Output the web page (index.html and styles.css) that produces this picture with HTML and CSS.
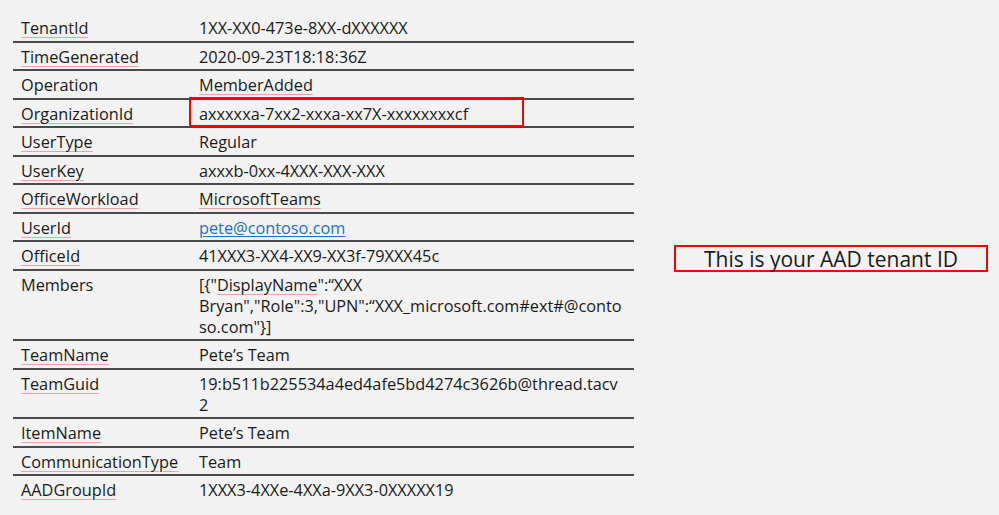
FILE: index.html
```html
<!DOCTYPE html>
<html lang="en">
<head>
<meta charset="utf-8">
<title>Audit record</title>
<link rel="stylesheet" href="styles.css">
</head>
<body>
<main class="page">
  <table class="record">
    <tbody>
      <tr><td class="key"><span class="spell">TenantId</span></td><td class="val">1XX-XX0-473e-8XX-dXXXXXX</td></tr>
      <tr><td class="key"><span class="spell">TimeGenerated</span></td><td class="val">2020-09-23T18:18:36Z</td></tr>
      <tr><td class="key">Operation</td><td class="val"><span class="spell">MemberAdded</span></td></tr>
      <tr><td class="key"><span class="spell">OrganizationId</span></td><td class="val flag">axxxxxa-7xx2-xxxa-xx7X-xxxxxxxxcf</td></tr>
      <tr><td class="key"><span class="spell">UserType</span></td><td class="val">Regular</td></tr>
      <tr><td class="key"><span class="spell">UserKey</span></td><td class="val">axxxb-0xx-4XXX-XXX-XXX</td></tr>
      <tr><td class="key"><span class="spell">OfficeWorkload</span></td><td class="val"><span class="spell">MicrosoftTeams</span></td></tr>
      <tr><td class="key"><span class="spell">UserId</span></td><td class="val"><a class="link" href="#">pete@contoso.com</a></td></tr>
      <tr><td class="key"><span class="spell">OfficeId</span></td><td class="val">41XXX3-XX4-XX9-XX3f-79XXX45c</td></tr>
      <tr><td class="key">Members</td><td class="val">[{"<span class="spell">DisplayName</span>":“XXX<br>Bryan","Role":3,"UPN":“XXX_microsoft.com#ext#@conto<br>so.com"}]</td></tr>
      <tr><td class="key"><span class="spell">TeamName</span></td><td class="val">Pete’s Team</td></tr>
      <tr><td class="key"><span class="spell">TeamGuid</span></td><td class="val">19:b511b225534a4ed4afe5bd4274c3626b@thread.tacv<br>2</td></tr>
      <tr><td class="key"><span class="spell">ItemName</span></td><td class="val">Pete’s Team</td></tr>
      <tr><td class="key"><span class="spell">CommunicationType</span></td><td class="val">Team</td></tr>
      <tr><td class="key"><span class="spell">AADGroupId</span></td><td class="val">1XXX3-4XXe-4XXa-9XX3-0XXXXX19</td></tr>
    </tbody>
  </table>
  <aside class="note">
    <p class="note-box">This is your AAD tenant ID</p>
  </aside>
</main>
</body>
</html>
```

FILE: styles.css
```css
html, body {
  margin: 0;
  padding: 0;
  background: #f2f2f2;
}

body {
  width: 999px;
  height: 515px;
  overflow: hidden;
  font-family: "Open Sans", "Noto Sans", sans-serif;
  color: #1a1a1a;
}

.page {
  display: flex;
  align-items: center;
  padding: 14px 0 0 13px;
}

.record {
  width: 621px;
  border-collapse: collapse;
  table-layout: fixed;
  font-size: 16.3px;
  line-height: 21px;
}

.record td {
  padding: 4px 8px 1.5px;
  vertical-align: top;
  border-bottom: 2px solid #4a4a4a;
  white-space: nowrap;
}

.record tr:last-child td {
  border-bottom: none;
}

.key {
  width: 162px;
}

.flag {
  position: relative;
}

.flag::after {
  content: "";
  position: absolute;
  left: -2px;
  top: -3px;
  width: 335px;
  height: 30px;
  border: 2px solid #f00;
  box-sizing: border-box;
}

.spell {
  text-decoration: underline;
  text-decoration-color: #f2a0a8;
  text-decoration-thickness: 1px;
  text-underline-offset: 3px;
}

.link {
  color: #1a73c8;
  text-decoration: underline;
  text-underline-offset: 2px;
}

.note {
  margin-left: 40px;
  margin-top: 0;
}

.note-box {
  margin: 0;
  width: 314px;
  height: 27px;
  box-sizing: border-box;
  border: 2px solid #f00;
  padding-top: 1px;
  font-size: 21px;
  line-height: 22px;
  text-align: center;
  color: #1a1a1a;
}
```
